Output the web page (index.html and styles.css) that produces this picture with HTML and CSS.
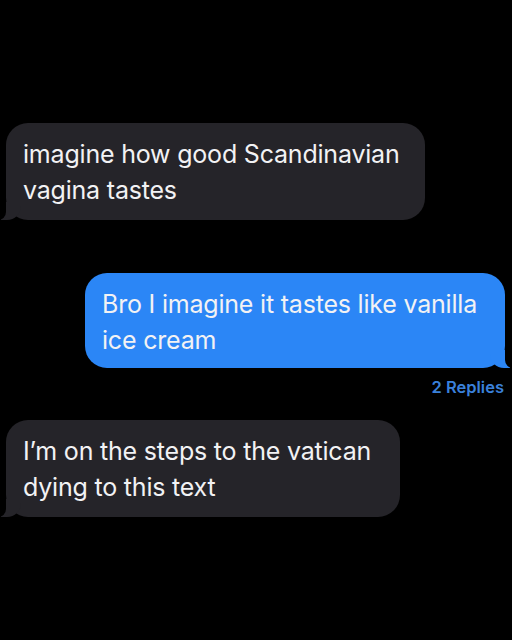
FILE: index.html
```html
<!DOCTYPE html>
<html>
<head>
<meta charset="utf-8">
<link rel="stylesheet" href="styles.css">
</head>
<body>
<main class="chat">
  <div class="bubble them b1">imagine how good Scandinavian vagina tastes</div>
  <div class="bubble me b2">Bro I imagine it tastes like vanilla ice cream</div>
  <div class="replies">2 Replies</div>
  <div class="bubble them b3">I’m on the steps to the vatican dying to this text</div>
</main>
</body>
</html>
```
FILE: styles.css
```css
html, body {
  margin: 0;
  background: #000;
}
body {
  width: 512px;
  height: 640px;
  overflow: hidden;
  font-family: Inter, "Noto Sans", sans-serif;
}
.chat {
  display: flex;
  flex-direction: column;
  padding-top: 123px;
}
.bubble {
  position: relative;
  box-sizing: border-box;
  font-size: 25px;
  line-height: 36px;
  color: #f2f2f4;
  padding: 13px 18px 15px 17px;
  border-radius: 22px;
  letter-spacing: -0.2px;
}
.them {
  background: #252429;
  align-self: flex-start;
  margin-left: 6px;
}
.me {
  background: #2b86f6;
  align-self: flex-end;
  margin-right: 7px;
}
.b1 { width: 419px; height: 97px; }
.b2 { width: 420px; height: 95px; margin-top: 53px; }
.b3 { width: 394px; height: 97px; margin-top: 22px; }
.them::before {
  content: "";
  position: absolute;
  left: -5px;
  bottom: 0;
  width: 20px;
  height: 18px;
  background: #252429;
  border-bottom-right-radius: 14px;
}
.them::after {
  content: "";
  position: absolute;
  left: -10px;
  bottom: 0;
  width: 10px;
  height: 20px;
  background: #000;
  border-bottom-right-radius: 8px;
}
.me::before {
  content: "";
  position: absolute;
  right: -5px;
  bottom: 0;
  width: 20px;
  height: 18px;
  background: #2b86f6;
  border-bottom-left-radius: 14px;
}
.me::after {
  content: "";
  position: absolute;
  right: -10px;
  bottom: 0;
  width: 10px;
  height: 20px;
  background: #000;
  border-bottom-left-radius: 8px;
}
.replies {
  align-self: flex-end;
  margin-right: 8px;
  margin-top: 8px;
  font-size: 16.5px;
  line-height: 22px;
  font-weight: 600;
  color: #3a80da;
}
```
